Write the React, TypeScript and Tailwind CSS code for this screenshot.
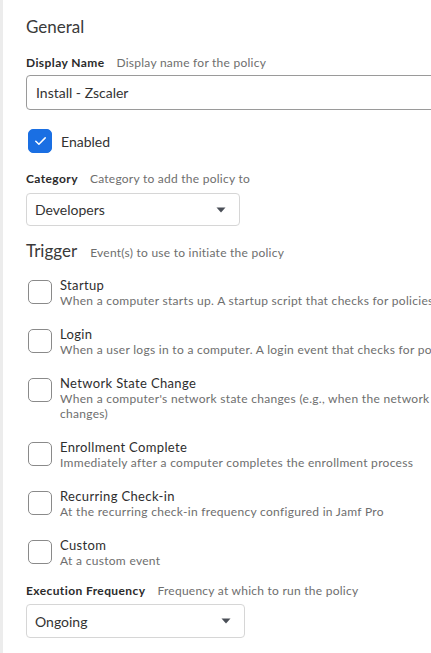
import React, { useState } from 'react';

type Trigger = { id: string; title: string; desc: string; more?: string };

const triggers: Trigger[] = [
  { id: 'startup', title: 'Startup', desc: 'When a computer starts up. A startup script that checks for policies must be configured in Jamf Pro for this to work' },
  { id: 'login', title: 'Login', desc: 'When a user logs in to a computer. A login event that checks for policies must be configured in Jamf Pro for this to work' },
  { id: 'network', title: 'Network State Change', desc: "When a computer's network state changes (e.g., when the network connection changes, when the computer name changes, when the IP address", more: 'changes)' },
  { id: 'enrollment', title: 'Enrollment Complete', desc: 'Immediately after a computer completes the enrollment process' },
  { id: 'recurring', title: 'Recurring Check-in', desc: 'At the recurring check-in frequency configured in Jamf Pro' },
  { id: 'custom', title: 'Custom', desc: 'At a custom event' },
];

const Caret = () => (
  <svg width="10" height="6" viewBox="0 0 10 6" className="shrink-0">
    <path d="M0.5 0.5 L9.5 0.5 L5 5.5 Z" fill="#4a4f57" />
  </svg>
);

const Box = ({ checked, onClick }: { checked: boolean; onClick: () => void }) => (
  <button
    onClick={onClick}
    className={`w-[24px] h-[24px] shrink-0 rounded-[5px] flex items-center justify-center ${
      checked ? 'bg-[#1a6fe3] border border-[#1a6fe3]' : 'bg-white border border-[#8a8a8a]'
    }`}
  >
    {checked && (
      <svg width="13" height="10" viewBox="0 0 13 10">
        <path d="M1.8 5.2 L4.9 8.2 L11.2 1.9" fill="none" stroke="white" strokeWidth="1.5" strokeLinecap="round" strokeLinejoin="round" />
      </svg>
    )}
  </button>
);

const Label = ({ name, hint }: { name: string; hint: string }) => (
  <div className="flex items-baseline gap-[12px] text-[12px] leading-[14px] whitespace-nowrap">
    <span className="font-bold text-[#2b2b2b] tracking-[0.4px]">{name}</span>
    <span className="text-[#6e6e6e] tracking-[0.25px]">{hint}</span>
  </div>
);

export default function App() {
  const [enabled, setEnabled] = useState(true);
  const [checked, setChecked] = useState<Record<string, boolean>>({});

  return (
    <div
      className="w-[431px] h-[653px] overflow-hidden bg-white border-l-[3px] border-[#ececec] pl-[23px] text-[#2e2e2e]"
      style={{ fontFamily: 'Lato, "Open Sans", sans-serif' }}
    >
      <h2 className="pt-[16px] text-[17px] leading-[22px] text-[#3a3a3a]">General</h2>

      <div className="mt-[18px]">
        <Label name="Display Name" hint="Display name for the policy" />
        <div className="mt-[5px] h-[35px] w-[460px] rounded-[4px] border border-[#9a9a9a] flex items-center px-[9px] text-[14px] text-[#333]">
          Install - Zscaler
        </div>
      </div>

      <div className="mt-[19px] flex items-center gap-[9px] pl-[2px]">
        <Box checked={enabled} onClick={() => setEnabled(!enabled)} />
        <span className="text-[14px] text-[#333]">Enabled</span>
      </div>

      <div className="mt-[19px]">
        <Label name="Category" hint="Category to add the policy to" />
        <div className="mt-[7px] h-[33px] w-[214px] rounded-[4px] border border-[#d6d6d6] flex items-center justify-between pl-[8px] pr-[13px] text-[14px] text-[#333]">
          <span>Developers</span>
          <Caret />
        </div>
      </div>

      <div className="mt-[14px] flex items-baseline gap-[13px] whitespace-nowrap">
        <h2 className="text-[17px] leading-[22px] text-[#3a3a3a]">Trigger</h2>
        <span className="text-[12px] tracking-[0.25px] text-[#6e6e6e]">Event(s) to use to initiate the policy</span>
      </div>

      <div className="mt-[15px] flex flex-col gap-[18px] pl-[2px]">
        {triggers.map(t => (
          <div key={t.id} className="flex items-start gap-[8px]">
            <div className="pt-[3px]">
              <Box checked={!!checked[t.id]} onClick={() => setChecked(c => ({ ...c, [t.id]: !c[t.id] }))} />
            </div>
            <div className="min-w-0 whitespace-nowrap">
              <div className="text-[13px] leading-[16px] tracking-[0.35px] text-[#2e2e2e]">{t.title}</div>
              <div className="text-[12px] leading-[15px] tracking-[0.3px] text-[#6e6e6e]">{t.desc}</div>
              {t.more && (
                <div className="text-[12px] leading-[15px] tracking-[0.3px] text-[#6e6e6e]">{t.more}</div>
              )}
            </div>
          </div>
        ))}
      </div>

      <div className="mt-[16px]">
        <Label name="Execution Frequency" hint="Frequency at which to run the policy" />
        <div className="mt-[6px] h-[34px] w-[219px] rounded-[4px] border border-[#d6d6d6] flex items-center justify-between pl-[8px] pr-[13px] text-[14px] text-[#333]">
          <span>Ongoing</span>
          <Caret />
        </div>
      </div>
    </div>
  );
}
